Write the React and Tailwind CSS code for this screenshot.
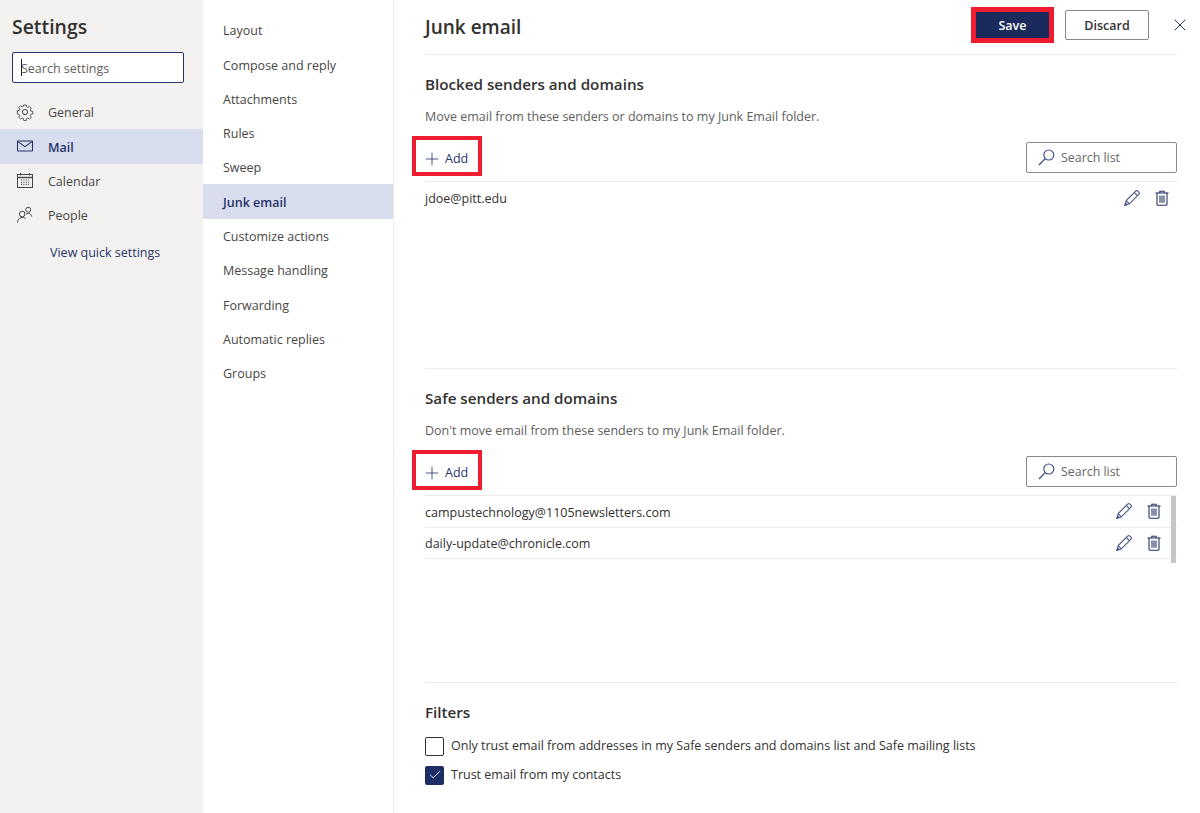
import React from 'react'
import { Plus, X, Check } from 'lucide-react'

const font = "font-['Open_Sans',sans-serif]"

const GearIcon = ({ className }) => (
  <svg width="18" height="18" viewBox="0 0 18 18" fill="none" stroke="currentColor" strokeWidth="1" className={className}>
    <circle cx="9" cy="9" r="2.6" />
    <path d="M7.6 1.2h2.8l.4 2.2 1.3.6 1.9-1.2 2 2-1.2 1.9.6 1.3 2.2.4v2.8l-2.2.4-.6 1.3 1.2 1.9-2 2-1.9-1.2-1.3.6-.4 2.2H7.6l-.4-2.2-1.3-.6-1.9 1.2-2-2 1.2-1.9-.6-1.3-2.2-.4V7.6l2.2-.4.6-1.3-1.2-1.9 2-2 1.9 1.2 1.3-.6z" transform="translate(.9 .9) scale(.9)" />
  </svg>
)

const MailIcon = ({ className }) => (
  <svg width="18" height="18" viewBox="0 0 18 18" fill="none" stroke="currentColor" strokeWidth="1.1" className={className}>
    <rect x="1.5" y="4" width="15" height="10" rx=".5" />
    <path d="M2 4.6 9 9.6l7-5" />
  </svg>
)

const CalendarIcon = ({ className }) => (
  <svg width="18" height="18" viewBox="0 0 18 18" fill="none" stroke="currentColor" strokeWidth="1" className={className}>
    <rect x="1.5" y="2.5" width="15" height="13" />
    <path d="M1.5 5.5h15" strokeWidth="1.4" />
    <path d="M4.5 1v2.5M13.5 1v2.5" />
    <path d="M5 8h8M5 10.2h8M5 12.4h8" strokeDasharray="1 1.4" strokeWidth="1.1" />
  </svg>
)

const PeopleIcon = ({ className }) => (
  <svg width="18" height="18" viewBox="0 0 18 18" fill="none" stroke="currentColor" strokeWidth="1" className={className}>
    <circle cx="6.2" cy="8" r="2.8" />
    <path d="M1.5 16.5c.1-2.8 1.8-5.2 4.7-5.2 1.4 0 2.6.6 3.4 1.6" />
    <circle cx="12.2" cy="3.8" r="2.5" />
    <path d="M10.2 8.2c.6-.5 1.3-.8 2-.8 2 0 3.3 1.4 3.6 3.3" />
  </svg>
)

const SearchIcon = ({ className }) => (
  <svg width="17" height="17" viewBox="0 0 17 17" fill="none" stroke="currentColor" strokeWidth="1.1" className={className}>
    <circle cx="10.8" cy="6" r="5" />
    <path d="M7.2 9.6 1 16" strokeWidth="1.3" />
  </svg>
)

const PencilIcon = ({ className }) => (
  <svg width="16" height="16" viewBox="0 0 16 16" fill="none" stroke="currentColor" strokeWidth="1.1" className={className}>
    <path d="M1 15.2 2.2 10.6 11.6 1.2c.6-.6 1.6-.6 2.3 0l.9.9c.6.7.6 1.7 0 2.3L5.4 13.8z" />
    <path d="M2.2 10.6 5.4 13.8M10.4 2.6l3 3" />
    <path d="M1 15.2 3 14.6 1.6 13.2z" fill="currentColor" />
  </svg>
)

const TrashIcon = ({ className }) => (
  <svg width="16" height="16" viewBox="0 0 16 16" fill="none" stroke="currentColor" strokeWidth="1.1" className={className}>
    <path d="M1.5 3h13" />
    <path d="M5.8 3V1.2h4.4V3" />
    <path d="M3 3v11c0 .8.5 1.3 1.2 1.3h7.6c.7 0 1.2-.5 1.2-1.3V3" />
    <path d="M6 5.6v7.2M8 5.6v7.2M10 5.6v7.2" />
  </svg>
)

const primaryNav = [
  { label: 'General', icon: GearIcon },
  { label: 'Mail', icon: MailIcon, active: true },
  { label: 'Calendar', icon: CalendarIcon },
  { label: 'People', icon: PeopleIcon },
]

const secondaryNav = [
  'Layout', 'Compose and reply', 'Attachments', 'Rules', 'Sweep', 'Junk email',
  'Customize actions', 'Message handling', 'Forwarding', 'Automatic replies', 'Groups',
]

function SearchList() {
  return (
    <div className="mt-[6px] flex h-[31px] w-[151px] items-center rounded-[2px] border border-[#8a8886] pl-[11px] text-[12.4px] text-[#666]">
      <SearchIcon className="mr-[6px] text-[#3b4a80]" />
      <span className="pt-[2px]">Search list</span>
    </div>
  )
}

function RowActions() {
  return (
    <div className="-mt-[4px] flex items-center gap-[14px] text-[#28336b]">
      <PencilIcon className="text-[#4a5585]" />
      <TrashIcon />
    </div>
  )
}

function AddRow() {
  return (
    <div className="flex items-start justify-between">
      <div className="-ml-[13px] flex h-[40px] w-[70px] items-center border-4 border-[#ed1c2e] pl-[6px] pt-[6px] text-[12.5px] text-[#28336b]">
        <Plus size={20} strokeWidth={1} className="mr-[3px]" />
        Add
      </div>
      <SearchList />
    </div>
  )
}

function SenderSection({ title, desc, children }) {
  return (
    <section className="h-[314px] border-b border-[#edebe9] pt-[18px]">
      <h2 className="text-[15.2px] leading-[22px] font-semibold text-[#323130]">{title}</h2>
      <p className="mt-[11px] text-[12.5px] leading-[22px] text-[#605e5c]">{desc}</p>
      <div className="mt-[8px]">
        <AddRow />
      </div>
      {children}
    </section>
  )
}

export default function App() {
  return (
    <div className={`flex h-[813px] w-[1200px] overflow-hidden bg-white ${font}`}>
      {/* Settings categories */}
      <aside className="w-[203px] shrink-0 bg-[#f3f2f1]">
        <h1 className="pl-[12px] pt-[11px] text-[19.4px] leading-[32px] font-semibold text-[#323130]">Settings</h1>
        <div className="mx-[12px] mt-[9px] flex h-[31px] w-[172px] items-center rounded-[2px] border border-[#28336b] bg-white pl-[8px] text-[12.5px] text-[#605e5c]">
          <span className="-mr-px h-[17px] w-px bg-[#222]" />
          <span className="pt-[3px]">Search settings</span>
        </div>
        <nav className="mt-[12px]">
          {primaryNav.map(({ label, icon: Icon, active }) => (
            <div
              key={label}
              className={`flex h-[34.3px] items-center pl-[16px] text-[12.5px] ${active ? 'bg-[#d8deee] font-semibold text-[#28336b]' : 'text-[#484644]'}`}
            >
              <Icon className={`mr-[14px] ${active ? 'text-[#28336b]' : 'text-[#484644]'}`} />
              <span className="pt-[3px]">{label}</span>
            </div>
          ))}
        </nav>
        <div className="pl-[50px] pt-[11px] text-[12.5px] leading-[20px] text-[#28336b]">View quick settings</div>
      </aside>

      {/* Mail settings */}
      <nav className="w-[191px] shrink-0 border-r border-[#edebe9] pt-[13px]">
        {secondaryNav.map((label) => (
          <div
            key={label}
            className={`flex h-[34.3px] items-center pl-[20px] pt-[3px] text-[12.5px] ${label === 'Junk email' ? 'bg-[#d8deee] font-semibold text-[#28336b]' : 'text-[#484644]'}`}
          >
            {label}
          </div>
        ))}
      </nav>

      {/* Junk email panel */}
      <main className="flex-1 pl-[31px] pr-[23px]">
        <header className="flex h-[55px] items-center justify-between border-b border-[#edebe9]">
          <h2 className="text-[19px] font-semibold text-[#323130]">Junk email</h2>
          <div className="-mr-[23px] -mt-[4px] flex items-center">
            <div className="flex h-[36px] w-[83px] items-center justify-center border-[5px] border-[#ed1c2e] bg-[#1b2a5c] pt-[3px] text-[12.5px] font-semibold text-white">Save</div>
            <div className="ml-[11px] flex h-[30px] w-[84px] items-center justify-center rounded-[2px] border border-[#8a8886] pt-[3px] text-[12.5px] font-semibold text-[#323130]">Discard</div>
            <X size={20} strokeWidth={1.2} className="ml-[21px] mr-[10px] text-[#28336b]" />
          </div>
        </header>

        <SenderSection title="Blocked senders and domains" desc="Move email from these senders or domains to my Junk Email folder.">
          <div className="mt-[5px] flex h-[32px] items-center justify-between border-t border-[#edebe9] pr-[7px] pt-[4px] text-[12.5px] text-[#323130]">
            jdoe@pitt.edu
            <RowActions />
          </div>
        </SenderSection>

        <SenderSection title="Safe senders and domains" desc="Don't move email from these senders to my Junk Email folder.">
          <div className="relative mt-[5px] border-t border-[#edebe9]">
            {['campustechnology@1105newsletters.com', 'daily-update@chronicle.com'].map((email) => (
              <div key={email} className="flex h-[31.5px] items-center justify-between border-b border-[#edebe9] pr-[15px] pt-[4px] text-[12.5px] text-[#323130]">
                {email}
                <RowActions />
              </div>
            ))}
            <div className="absolute right-[1px] top-0 h-[67px] w-[5px] bg-[#c8c6c4]" />
          </div>
        </SenderSection>

        <section className="pt-[18px]">
          <h2 className="text-[15.2px] leading-[22px] font-semibold text-[#323130]">Filters</h2>
          <label className="mt-[13px] flex h-[20px] items-center text-[12.5px] text-[#323130]">
            <span className="mr-[7px] h-[19px] w-[19px] rounded-[2px] border border-[#323130]" />
            Only trust email from addresses in my Safe senders and domains list and Safe mailing lists
          </label>
          <label className="mt-[9px] flex h-[20px] items-center text-[12.5px] text-[#323130]">
            <span className="mr-[7px] flex h-[19px] w-[19px] items-center justify-center rounded-[2px] bg-[#1f2d66] text-white">
              <Check size={14} strokeWidth={1.5} />
            </span>
            Trust email from my contacts
          </label>
        </section>
      </main>
    </div>
  )
}
